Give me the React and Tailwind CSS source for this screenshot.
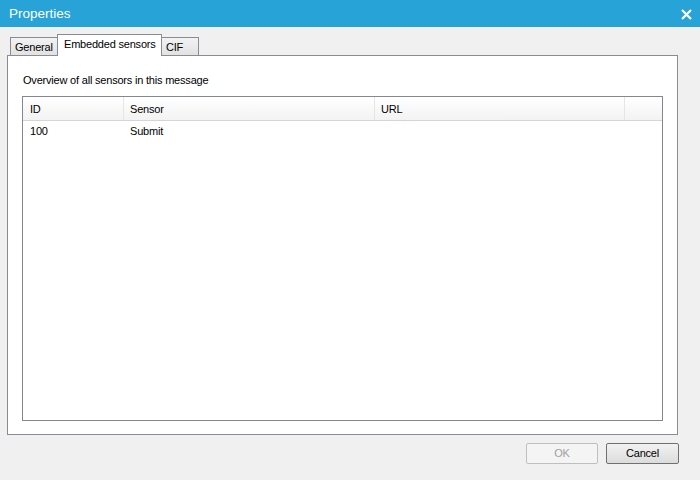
import React from "react";

export default function App() {
  const font = { fontFamily: '"Liberation Sans", Arial, sans-serif' };
  return (
    <div
      className="w-[700px] h-[480px] bg-[#f0f0f0] flex flex-col overflow-hidden text-[11px] tracking-[-0.2px] text-black whitespace-nowrap"
      style={font}
    >
      {/* Title bar */}
      <div className="h-[27px] bg-[#27a3d7] flex items-center justify-between pl-[9px] pr-[8px] shrink-0">
        <span className="text-white text-[13.5px] tracking-normal leading-none">Properties</span>
        <svg width="11" height="11" viewBox="0 0 11 11" className="mt-[1px]">
          <path d="M1 1 L10 10 M10 1 L1 10" stroke="white" strokeWidth="2.2" />
        </svg>
      </div>

      {/* Tabs */}
      <div className="h-[29px] pl-[10px] flex items-end shrink-0 relative z-10">
        <div className="h-[18px] w-[47px] border border-[#898c95] border-r-0 border-b-0 bg-gradient-to-b from-[#f2f2f2] to-[#e2e2e2] flex items-center pl-[4px] pt-[2px] mb-[1px] leading-none">
          General
        </div>
        <div className="h-[22px] w-[105px] border border-[#898c95] border-b-0 bg-white flex items-start pt-[4px] pl-[6px] leading-none">
          Embedded sensors
        </div>
        <div className="h-[18px] w-[37px] border border-[#898c95] border-l-0 border-b-0 bg-gradient-to-b from-[#f2f2f2] to-[#e2e2e2] flex items-center pl-[4px] pt-[2px] mb-[1px] leading-none">
          CIF
        </div>
      </div>

      {/* Panel */}
      <div className="ml-[7px] w-[671px] h-[380px] -mt-[1px] border border-[#898c95] bg-white flex flex-col shrink-0">
        <div className="pl-[15px] pt-[17px] leading-[15px] h-[40px]">
          Overview of all sensors in this message
        </div>
        <div className="ml-[14px] mr-[14px] flex-1 mb-[13px] border border-[#828790] flex flex-col">
          <div className="h-[24px] flex border-b border-[#d5d5d5] bg-gradient-to-b from-white to-[#f3f3f4]">
            <div className="w-[101px] border-r border-[#e5e5e5] flex items-center pl-[7px] pt-[1px]">ID</div>
            <div className="w-[251px] border-r border-[#e5e5e5] flex items-center pl-[6px] pt-[1px]">Sensor</div>
            <div className="w-[250px] border-r border-[#e5e5e5] flex items-center pl-[6px] pt-[1px]">URL</div>
            <div className="flex-1"></div>
          </div>
          <div className="h-[20px] flex items-center pt-[1px]">
            <div className="w-[101px] pl-[7px]">100</div>
            <div className="pl-[6px]">Submit</div>
          </div>
        </div>
      </div>

      {/* Buttons */}
      <div className="flex justify-end pr-[21px] pt-[8px] gap-[8px]">
        <div className="w-[72px] h-[21px] border border-[#bfbfbf] rounded-[2px] bg-[#f4f4f4] text-[#a0a0a0] flex items-center justify-center">
          OK
        </div>
        <div className="w-[73px] h-[21px] border border-[#707070] rounded-[2px] bg-gradient-to-b from-[#f2f2f2] to-[#dcdcdc] flex items-center justify-center">
          Cancel
        </div>
      </div>
    </div>
  );
}
